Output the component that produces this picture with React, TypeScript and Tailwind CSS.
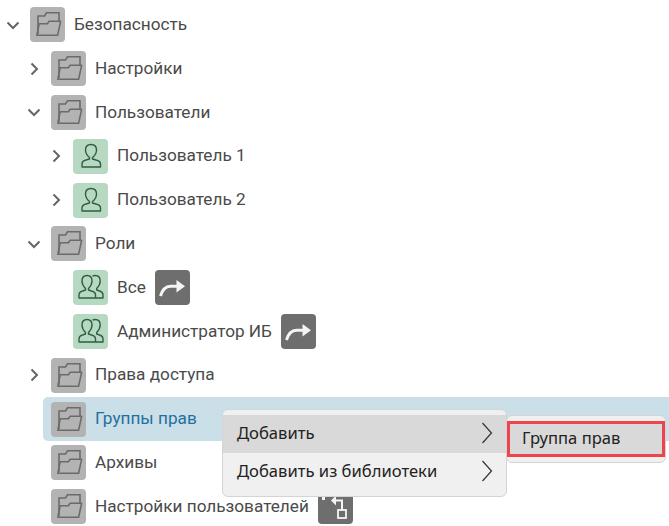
import { ReactNode } from "react";

function FolderIcon() {
  return (
    <div className="flex h-[35px] w-[35px] shrink-0 items-center justify-center rounded-[4px] bg-[#b3b3b3]">
      <svg width="35" height="35" viewBox="0 0 35 35" fill="none" stroke="#6b6b6b" strokeWidth="1.6">
        <path d="M8 27V9h6.5l2-3.2h12.5V14" />
        <path d="M6.8 28.3l2.4-11.6h8.2l1.7-2.4h11.5l-3 14z" strokeLinejoin="round" />
      </svg>
    </div>
  );
}

function UserIcon() {
  return (
    <div className="flex h-[35px] w-[35px] shrink-0 items-center justify-center rounded-[4px] bg-[#b8d9c1]">
      <svg width="35" height="35" viewBox="0 0 35 35" fill="none" stroke="#2f5d46" strokeWidth="1.4">
        <path d="M9 28v-3c0-2.500 2-3.500 4-4l3.500-1v-1.500c-2.500-2-4-4.500-4-7.500 0-3.500 2.200-5.500 5.500-5.500s5.500 2 5.500 5.500c0 3-1.500 5.500-4 7.500V20l3.500 1c2 .5 4.500 1.500 4.500 4v3z" strokeLinejoin="round" />
      </svg>
    </div>
  );
}

function GroupIcon() {
  return (
    <div className="flex h-[35px] w-[35px] shrink-0 items-center justify-center rounded-[4px] bg-[#b8d9c1]">
      <svg width="35" height="35" viewBox="0 0 35 35" fill="none" stroke="#2f5d46" strokeWidth="1.4">
        <path d="M6 28v-3c0-2.500 1.500-3.500 3.500-4l3-1v-1.500c-2-2-3.500-4.500-3.500-7.500 0-3.500 2-5.500 5-5.500s5 2 5 5.500c0 3-1.500 5.500-3.500 7.500V20l3 1c2 .5 4 1.500 4 4v3z" strokeLinejoin="round" />
        <path d="M19.500 6.200c.8-.5 1.700-.7 2.700-.7 3 0 5 2 5 5.500 0 3-1.500 5.500-3.500 7.500V20l3 1c1.800.5 3.300 1.500 3.300 4v3h-7" strokeLinejoin="round" />
      </svg>
    </div>
  );
}

function ShortcutBadge() {
  return (
    <div className="flex h-[35px] w-[35px] shrink-0 items-center justify-center rounded-[4px] bg-[#6e6e6e]">
      <svg width="35" height="35" viewBox="0 0 35 35" fill="none">
        <path d="M5.500 26c1.500-5 4.500-9.500 10-9.700h8" stroke="#f4f4f4" strokeWidth="3" />
        <path d="M21.500 10l8.500 6.300-8.500 6.300z" fill="#f4f4f4" />
      </svg>
    </div>
  );
}

function MoveBadge() {
  return (
    <div className="flex h-[35px] w-[35px] shrink-0 items-center justify-center rounded-[4px] bg-[#6e6e6e]">
      <svg width="35" height="35" viewBox="0 0 35 35" fill="none">
        <rect x="4" y="8" width="3" height="3" fill="#f4f4f4" />
        <path d="M13 11.500l5-5v10z" fill="#f4f4f4" />
        <path d="M17 11.500h7V21" stroke="#f4f4f4" strokeWidth="2" />
        <rect x="20" y="21" width="8" height="8" stroke="#f4f4f4" strokeWidth="1.800" />
      </svg>
    </div>
  );
}

function Chevron({ open }: { open?: boolean }) {
  return (
    <svg width="14" height="14" viewBox="0 0 14 14" fill="none" stroke="#666666" strokeWidth="2">
      {open ? <path d="M1.500 4.500l5.500 5.500 5.500-5.500" /> : <path d="M4.500 1.500l5.500 5.500-5.500 5.500" />}
    </svg>
  );
}

function Row({
  indent,
  chevron,
  icon,
  label,
  badge,
}: {
  indent: string;
  chevron?: "open" | "closed";
  icon: ReactNode;
  label: string;
  badge?: ReactNode;
}) {
  return (
    <div className={`flex h-[43.8px] items-center ${indent}`}>
      <div className="flex w-[26px] shrink-0 items-center justify-start pl-[2px]">
        {chevron && <Chevron open={chevron === "open"} />}
      </div>
      {icon}
      <span className="ml-[9px] text-[#4a4a4a]">{label}</span>
      {badge && <div className="ml-[9px]">{badge}</div>}
    </div>
  );
}

function MenuArrow() {
  return (
    <svg width="12" height="22" viewBox="0 0 12 22" fill="none" stroke="#333333" strokeWidth="1.200">
      <path d="M1.500 1l9 10-9 10" />
    </svg>
  );
}

export default function App() {
  return (
    <div className="relative h-[526px] w-[669px] overflow-hidden bg-white pt-[3px] font-['Roboto',sans-serif] text-[17.2px]">
      <Row indent="pl-[4px]" chevron="open" icon={<FolderIcon />} label="Безопасность" />
      <Row indent="pl-[25px]" chevron="closed" icon={<FolderIcon />} label="Настройки" />
      <Row indent="pl-[25px]" chevron="open" icon={<FolderIcon />} label="Пользователи" />
      <Row indent="pl-[47px]" chevron="closed" icon={<UserIcon />} label="Пользователь 1" />
      <Row indent="pl-[47px]" chevron="closed" icon={<UserIcon />} label="Пользователь 2" />
      <Row indent="pl-[25px]" chevron="open" icon={<FolderIcon />} label="Роли" />
      <Row indent="pl-[47px]" icon={<GroupIcon />} label="Все" badge={<ShortcutBadge />} />
      <Row indent="pl-[47px]" icon={<GroupIcon />} label="Администратор ИБ" badge={<ShortcutBadge />} />
      <Row indent="pl-[25px]" chevron="closed" icon={<FolderIcon />} label="Права доступа" />

      <div className="ml-[43px] flex h-[43.8px] items-center rounded-l-[5px] bg-[#cbdfe8] pl-[8px]">
        <FolderIcon />
        <span className="ml-[9px] text-[#22709f]">Группы прав</span>
      </div>

      <Row indent="pl-[25px]" icon={<FolderIcon />} label="Архивы" />
      <Row indent="pl-[25px]" icon={<FolderIcon />} label="Настройки пользователей" badge={<MoveBadge />} />

      {/* context menu */}
      <div className="absolute left-[222px] top-[409px] w-[285px] rounded-[6px] border border-[#d4d4d4] bg-[#f0f0f0] py-[5px] font-['Noto_Sans',sans-serif] text-[16.6px] text-[#222222]">
        <div className="flex h-[38px] items-center justify-between bg-[#d9d9d9] pb-[2px] pl-[14px] pr-[13px]">
          <span>Добавить</span>
          <MenuArrow />
        </div>
        <div className="flex h-[38px] items-center justify-between pb-[2px] pl-[14px] pr-[13px]">
          <span>Добавить из библиотеки</span>
          <MenuArrow />
        </div>
      </div>

      <div className="absolute left-[506px] top-[415px] w-[160px] rounded-[6px] border border-[#d4d4d4] bg-[#f0f0f0] py-[5px] font-['Noto_Sans',sans-serif] text-[16.6px] text-[#222222]">
        <div className="flex h-[36px] items-center border-[3px] border-[#f0444c] bg-[#d9d9d9] pb-[2px] pl-[12px]">
          Группа прав
        </div>
      </div>
    </div>
  );
}
